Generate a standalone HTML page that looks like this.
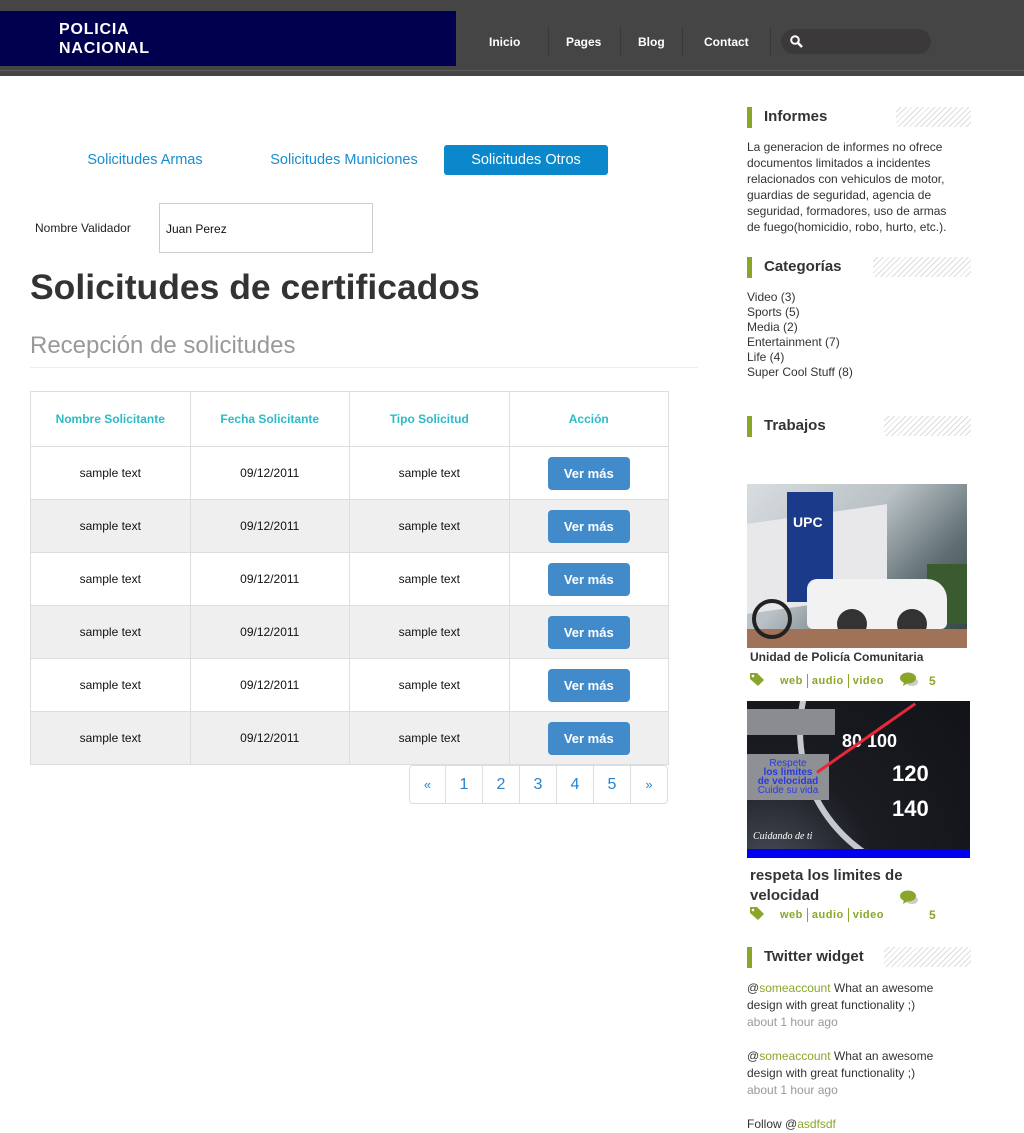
<!DOCTYPE html>
<html><head><meta charset="utf-8">
<style>
*{margin:0;padding:0;box-sizing:border-box}
body{width:1024px;height:1132px;background:#fff;font-family:"Liberation Sans",Arial,sans-serif;position:relative;overflow:hidden;color:#333}
.abs{position:absolute}
#hdr{left:0;top:0;width:1024px;height:76px;background:#454545}
#hdr .line{left:0;top:70px;width:1024px;height:1px;background:#5a5a5a}
#logo{left:0;top:11px;width:456px;height:55px;background:#00004f;color:#fff;font-weight:bold;font-size:16px;line-height:19px;padding:9px 0 0 59px;letter-spacing:0.8px}
.nav{top:35px;color:#fff;font-size:12px;font-weight:bold}
.sep{top:27px;width:1px;height:29px;background:#393939}
#search{left:781px;top:29px;width:150px;height:25px;border-radius:13px;background:#3b3939}
.tab{top:145px;height:30px;line-height:31px;font-size:14.5px;color:#1a8ccf;text-align:center}
table{position:absolute;left:30px;top:391px;border-collapse:collapse;width:639px}
td{border:1px solid #ddd;text-align:center;font-size:12px;color:#111;height:53px;width:159px}
tr.h td{height:55px;color:#2bbcc8;font-weight:bold}
tr.g td{background:#efefef}
.btn{display:inline-block;width:82px;height:33px;line-height:33px;background:#428bca;color:#fff;border-radius:4px;font-weight:bold;font-size:13px}
.pg{top:765px;height:39px;width:37px;border:1px solid #ddd;border-left:none;text-align:center;line-height:38px;color:#2a83cc;font-size:16px}
.sh{left:747px;height:21px;border-left:5px solid #8aa62a;padding-left:12px;font-weight:bold;font-size:15px;line-height:20px;color:#333}
.hatch{height:20px;background:repeating-linear-gradient(135deg,#fff 0 3px,#ddd 3px 4px)}
.side{left:747px;font-size:12px;line-height:15px;color:#333}
.tags{left:747px;font-size:11px;font-weight:bold;color:#8aa62a;letter-spacing:0.5px}
.tags span.b{display:inline-block;width:1px;height:14px;background:#8aa62a;vertical-align:middle;margin:0 4px}
.tw{left:747px;font-size:12px;line-height:17px;color:#333;width:220px}
.tw a{color:#8aa62a}
.tw .t{color:#999}
</style></head><body>
<div id="hdr" class="abs"><div class="line abs"></div></div>
<div id="logo" class="abs">POLICIA<br>NACIONAL</div>
<div class="nav abs" style="left:489px">Inicio</div>
<div class="sep abs" style="left:548px"></div>
<div class="nav abs" style="left:566px">Pages</div>
<div class="sep abs" style="left:620px"></div>
<div class="nav abs" style="left:638px">Blog</div>
<div class="sep abs" style="left:682px"></div>
<div class="nav abs" style="left:704px">Contact</div>
<div class="sep abs" style="left:770px"></div>
<div id="search" class="abs"><svg width="16" height="16" style="position:absolute;left:8px;top:5px"><circle cx="6" cy="6" r="3.8" stroke="#fff" stroke-width="2" fill="none"/><line x1="9" y1="9" x2="13" y2="13" stroke="#fff" stroke-width="2.5"/></svg></div>

<div class="tab abs" style="left:70px;width:150px">Solicitudes Armas</div>
<div class="tab abs" style="left:258px;width:172px">Solicitudes Municiones</div>
<div class="tab abs" style="left:444px;width:164px;background:#0a88cb;color:#fff;border-radius:3px">Solicitudes Otros</div>

<div class="abs" style="left:35px;top:221px;font-size:12px;color:#222">Nombre Validador</div>
<div class="abs" style="left:159px;top:203px;width:214px;height:50px;border:1px solid #ccc;font-size:12px;padding:18px 0 0 6px;color:#111">Juan Perez</div>

<div class="abs" style="left:30px;top:267px;font-size:35.5px;font-weight:bold;color:#333">Solicitudes de certificados</div>
<div class="abs" style="left:30px;top:332px;font-size:24px;color:#999">Recepción de solicitudes</div>
<div class="abs" style="left:30px;top:367px;width:668px;height:1px;background:#eee"></div>

<table>
<tr class="h"><td>Nombre Solicitante</td><td>Fecha Solicitante</td><td>Tipo Solicitud</td><td>Acción</td></tr>
<tr><td>sample text</td><td>09/12/2011</td><td>sample text</td><td><span class="btn">Ver más</span></td></tr>
<tr class="g"><td>sample text</td><td>09/12/2011</td><td>sample text</td><td><span class="btn">Ver más</span></td></tr>
<tr><td>sample text</td><td>09/12/2011</td><td>sample text</td><td><span class="btn">Ver más</span></td></tr>
<tr class="g"><td>sample text</td><td>09/12/2011</td><td>sample text</td><td><span class="btn">Ver más</span></td></tr>
<tr><td>sample text</td><td>09/12/2011</td><td>sample text</td><td><span class="btn">Ver más</span></td></tr>
<tr class="g"><td>sample text</td><td>09/12/2011</td><td>sample text</td><td><span class="btn">Ver más</span></td></tr>
</table>
<div class="pg abs" style="left:409px;border-left:1px solid #ddd;border-radius:4px 0 0 4px;font-size:13px">«</div>
<div class="pg abs" style="left:446px">1</div>
<div class="pg abs" style="left:483px">2</div>
<div class="pg abs" style="left:520px">3</div>
<div class="pg abs" style="left:557px">4</div>
<div class="pg abs" style="left:594px">5</div>
<div class="pg abs" style="left:631px;border-radius:0 4px 4px 0;font-size:13px">»</div>

<div class="sh abs" style="top:107px">Informes</div>
<div class="hatch abs" style="left:896px;top:107px;width:75px"></div>
<div class="side abs" style="top:139px;width:212px;line-height:16px">La generacion de informes no ofrece documentos limitados a incidentes relacionados con vehiculos de motor, guardias de seguridad, agencia de seguridad, formadores, uso de armas de fuego(homicidio, robo, hurto, etc.).</div>

<div class="sh abs" style="top:257px">Categorías</div>
<div class="hatch abs" style="left:873px;top:257px;width:98px"></div>
<div class="side abs" style="top:290px">Video (3)<br>Sports (5)<br>Media (2)<br>Entertainment (7)<br>Life (4)<br>Super Cool Stuff (8)</div>

<div class="sh abs" style="top:416px">Trabajos</div>
<div class="hatch abs" style="left:884px;top:416px;width:87px"></div>

<div class="abs" style="left:747px;top:484px;width:220px;height:164px;background:linear-gradient(135deg,#d8dde0 0%,#b9c1c6 40%,#5e6e72 70%,#30403f 100%);overflow:hidden">
 <div class="abs" style="left:0;top:30px;width:140px;height:90px;background:#e8e8ea;transform:skewY(-8deg)"></div>
 <div class="abs" style="left:40px;top:8px;width:46px;height:110px;background:#1c3a8a;color:#fff;font-weight:bold;font-size:14px;padding:22px 0 0 6px">UPC</div>
 <div class="abs" style="left:180px;top:80px;width:40px;height:60px;background:#3a5a30"></div>
 <div class="abs" style="left:60px;top:95px;width:140px;height:50px;background:#f2f2f2;border-radius:10px 20px 6px 6px"></div>
 <div class="abs" style="left:90px;top:125px;width:30px;height:30px;border-radius:50%;background:#333"></div>
 <div class="abs" style="left:150px;top:125px;width:30px;height:30px;border-radius:50%;background:#333"></div>
 <div class="abs" style="left:0;top:145px;width:220px;height:20px;background:#a07258"></div>
 <div class="abs" style="left:5px;top:115px;width:40px;height:40px;border-radius:50%;border:4px solid #222"></div>
</div>
<div class="abs" style="left:750px;top:650px;font-size:12px;font-weight:bold;color:#333">Unidad de Policía Comunitaria</div>
<svg class="abs" style="left:749px;top:672px" width="16" height="15"><path d="M1 1h7l7 7-6 6-8-7z" fill="#8aa62a"/><circle cx="4" cy="4" r="1.3" fill="#fff"/></svg>
<div class="tags abs" style="left:780px;top:674px">web<span class="b"></span>audio<span class="b"></span>video</div>
<svg class="abs" style="left:900px;top:672px" width="18" height="16"><ellipse cx="12" cy="10" rx="6" ry="4" fill="#ccc"/><ellipse cx="8" cy="6" rx="8" ry="5.5" fill="#8aa62a"/><path d="M4 10l-1 4 5-3z" fill="#8aa62a"/></svg>
<div class="tags abs" style="left:929px;top:674px;font-size:12px">5</div>

<div class="abs" style="left:747px;top:701px;width:223px;height:157px;background:radial-gradient(circle at 10% 110%,#4a4f5a 0%,#1a1c22 40%,#121318 100%);overflow:hidden">
 <div class="abs" style="left:50px;top:-120px;width:300px;height:300px;border-radius:50%;border:6px solid #c5c8cc"></div>
 <div class="abs" style="left:0;top:8px;width:88px;height:26px;background:#8a8c90"></div>
 <div class="abs" style="left:0;top:53px;width:82px;height:46px;background:#8f9095;color:#2a3bd6;font-size:10px;line-height:9px;text-align:center;padding-top:5px">Respete<br><b>los limites<br>de velocidad</b><br>Cuide su vida</div>
 <div class="abs" style="left:95px;top:30px;color:#fff;font-weight:bold;font-size:18px">80 100</div>
 <div class="abs" style="left:145px;top:60px;color:#fff;font-weight:bold;font-size:22px">120</div>
 <div class="abs" style="left:145px;top:95px;color:#fff;font-weight:bold;font-size:22px">140</div>
 <div class="abs" style="left:70px;top:70px;width:120px;height:3px;background:#e8283a;transform:rotate(-35deg);transform-origin:left"></div>
 <div class="abs" style="left:6px;top:130px;color:#fff;font-style:italic;font-size:10px;font-family:'Liberation Serif',serif">Cuidando de ti</div>
 <div class="abs" style="left:0;top:148px;width:223px;height:9px;background:#0000f0"></div>
</div>
<div class="abs" style="left:750px;top:866px;font-size:15px;font-weight:bold;color:#333;line-height:20px">respeta los limites de<br>velocidad</div>
<svg class="abs" style="left:900px;top:890px" width="18" height="16"><ellipse cx="12" cy="10" rx="6" ry="4" fill="#ccc"/><ellipse cx="8" cy="6" rx="8" ry="5.5" fill="#8aa62a"/><path d="M4 10l-1 4 5-3z" fill="#8aa62a"/></svg>
<svg class="abs" style="left:749px;top:906px" width="16" height="15"><path d="M1 1h7l7 7-6 6-8-7z" fill="#8aa62a"/><circle cx="4" cy="4" r="1.3" fill="#fff"/></svg>
<div class="tags abs" style="left:780px;top:908px">web<span class="b"></span>audio<span class="b"></span>video</div>
<div class="tags abs" style="left:929px;top:908px;font-size:12px">5</div>

<div class="sh abs" style="top:947px">Twitter widget</div>
<div class="hatch abs" style="left:884px;top:947px;width:87px"></div>
<div class="tw abs" style="top:980px">@<a>someaccount</a> What an awesome design with great functionality ;)<br><span class="t">about 1 hour ago</span></div>
<div class="tw abs" style="top:1048px">@<a>someaccount</a> What an awesome design with great functionality ;)<br><span class="t">about 1 hour ago</span></div>
<div class="tw abs" style="top:1116px">Follow @<a>asdfsdf</a></div>
</body></html>
